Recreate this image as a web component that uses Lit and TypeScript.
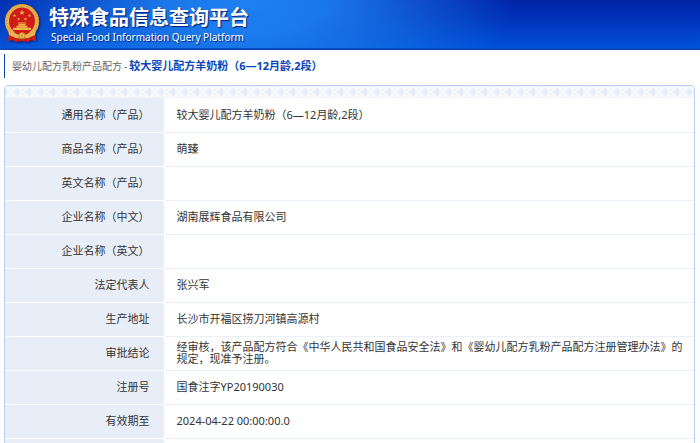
import { LitElement, html, css, svg } from "lit";
import { customElement } from "lit/decorators.js";

interface Field {
  label: string;
  value: string;
}

const FIELDS: Field[] = [
  { label: "通用名称（产品）", value: "较大婴儿配方羊奶粉（6—12月龄,2段）" },
  { label: "商品名称（产品）", value: "萌臻" },
  { label: "英文名称（产品）", value: "" },
  { label: "企业名称（中文）", value: "湖南展辉食品有限公司" },
  { label: "企业名称（英文）", value: "" },
  { label: "法定代表人", value: "张兴军" },
  { label: "生产地址", value: "长沙市开福区捞刀河镇高源村" },
  {
    label: "审批结论",
    value:
      "经审核，该产品配方符合《中华人民共和国食品安全法》和《婴幼儿配方乳粉产品配方注册管理办法》的规定，现准予注册。",
  },
  { label: "注册号", value: "国食注字YP20190030" },
  { label: "有效期至", value: "2024-04-22 00:00:00.0" },
  { label: "", value: "" },
];

const star = (cx: number, cy: number, r: number) => {
  const points = Array.from({ length: 10 }, (_, i) => {
    const radius = i % 2 ? r * 0.4 : r;
    const angle = (Math.PI / 5) * i - Math.PI / 2;
    return `${(cx + radius * Math.cos(angle)).toFixed(2)},${(cy + radius * Math.sin(angle)).toFixed(2)}`;
  }).join(" ");
  return svg`<polygon points=${points} fill="#f0b844" />`;
};

@customElement("site-emblem")
export class SiteEmblem extends LitElement {
  static styles = css`
    :host {
      display: block;
      flex: none;
      width: 36px;
      height: 40px;
      filter: drop-shadow(1px 1px 1px #03207c);
    }
    .emblem {
      display: block;
      width: 100%;
      height: 100%;
    }
  `;

  render() {
    return html`
      <svg class="emblem" viewBox="0 0 36 40" aria-hidden="true">
        <path d="M5 27 L4 37 L9 36 L12 38 L18 37 L24 38 L27 36 L32 37 L31 27Z" fill="#cf2018" />
        <ellipse cx="18" cy="17.5" rx="17.2" ry="17.5" fill="#c4882c" />
        <ellipse cx="18" cy="17.3" rx="16.6" ry="16.8" fill="#e9b654" />
        <ellipse cx="18" cy="17.3" rx="15" ry="15.4" fill="none" stroke="#d49c3c" stroke-width="1.6" stroke-dasharray="1.2 1.6" />
        <ellipse cx="18" cy="17" rx="13" ry="13.6" fill="#d01c18" />
        ${star(18, 8.6, 3)} ${star(10.5, 11.5, 1.9)} ${star(14.5, 15, 1.8)}
        ${star(21.5, 15, 1.8)} ${star(25.5, 11.5, 1.9)}
        <path d="M13.5 19.6 L14.5 18.4 H21.5 L22.5 19.6Z M14.5 20 H21.5 V21.4 H14.5Z M12.5 21.8 H23.5 V23.4 H12.5Z M9 23.8 H27 V26 H9Z" fill="#eeb848" />
        <path d="M4 26 Q9 31 14 30 L16 32.5 L12 34 L5 31Z M32 26 Q27 31 22 30 L20 32.5 L24 34 L31 31Z" fill="#e9b654" />
        <path d="M10 28.5 Q18 26 26 28.5 L22.5 30.5 Q18 28.5 13.5 30.5Z" fill="#d01c18" />
        <circle cx="18" cy="31.6" r="3" fill="#e9b654" stroke="#b87928" stroke-width="0.7" />
        <circle cx="18" cy="31.6" r="1.1" fill="#c98a2a" />
        <path d="M8 33 L10 37 M28 33 L26 37 M14.5 34.5 L14 38 M21.5 34.5 L22 38" stroke="#a31410" stroke-width="0.8" />
      </svg>
    `;
  }
}

@customElement("app-root")
export class AppRoot extends LitElement {
  static styles = css`
    :host {
      display: block;
      height: 100vh;
      overflow: hidden;
      background: #fff;
      color: #333;
      font: 11px/12px "Noto Sans", "Noto Sans CJK SC", sans-serif;
    }
    .banner {
      display: flex;
      align-items: flex-start;
      gap: 9px;
      box-sizing: border-box;
      height: 50px;
      padding: 4px 4px 0;
      border-bottom: 2px solid #0a4abb;
      background:
        radial-gradient(ellipse 270px 120px at 35% 0, #1e80f0 0%, rgba(30, 128, 240, 0.9) 30%, rgba(30, 128, 240, 0) 100%),
        linear-gradient(#0024a8 0%, #0030b8 35%, #0052d8 100%);
    }
    .brand {
      padding-top: 2px;
      color: #fff;
      text-shadow: 1px 1px 1px #03207c;
      white-space: nowrap;
    }
    .title {
      margin: 0;
      font-size: 20px;
      line-height: 24px;
      font-weight: 700;
    }
    .subtitle {
      margin: 0;
      padding-left: 2px;
      color: #fff;
      font-size: 10px;
      line-height: 14px;
    }
    .crumbs {
      display: flex;
      align-items: center;
      gap: 2px;
      margin: 4px 4px 7px;
      padding-left: 7px;
      height: 24px;
      border-left: 1px solid #0a46b8;
    }
    .section {
      color: #666;
      font-size: 10px;
    }
    .current {
      margin: 0;
      color: #0a46b8;
      font-size: 11px;
      font-weight: 700;
    }
    .panel {
      margin: 0 5px 0 4px;
      border: 1px solid #b9d0f3;
      border-radius: 4px 4px 0 0;
      overflow: hidden;
    }
    .pattern {
      display: block;
      width: 100%;
      height: 12px;
    }
    .record {
      width: 100%;
      border-collapse: collapse;
      table-layout: fixed;
    }
    .label,
    .value {
      box-sizing: border-box;
      height: 34px;
      padding: 0 8px 0 12px;
      font-weight: 400;
      vertical-align: middle;
    }
    .label {
      width: 159px;
      padding-right: 14px;
      border-right: 1px solid #fff;
      border-bottom: 1px solid #fff;
      background: #e8eef7;
      text-align: right;
    }
    .value {
      border-bottom: 1px solid #eaf0fa;
      text-align: left;
    }
  `;

  render() {
    return html`
      <header class="banner">
        <site-emblem></site-emblem>
        <div class="brand">
          <h1 class="title">特殊食品信息查询平台</h1>
          <p class="subtitle">Special Food Information Query Platform</p>
        </div>
      </header>
      <main>
        <div class="crumbs">
          <span class="section">婴幼儿配方乳粉产品配方</span>
          <span class="section">-</span>
          <h2 class="current">较大婴儿配方羊奶粉（6—12月龄,2段）</h2>
        </div>
        <section class="panel">
          <svg class="pattern" aria-hidden="true">
            <defs>
              <pattern id="lattice" width="12" height="12" patternUnits="userSpaceOnUse">
                <rect width="12" height="12" fill="#eff4fc" />
                <path d="M0 3 L3 6 L0 9Z M12 3 L9 6 L12 9Z M6 3 L9 6 L6 9 L3 6Z" fill="#e6eefa" />
                <path d="M0 0 L12 12 M12 0 L0 12" stroke="#fff" stroke-width="1.2" />
                <path d="M2 2 H10 M2 10 H10" stroke="#fff" stroke-width="0.8" />
                <path d="M0 0 V12" stroke="#e0e9f8" stroke-width="1.4" />
              </pattern>
            </defs>
            <rect width="100%" height="12" fill="url(#lattice)" />
          </svg>
          <table class="record">
            <tbody>
              ${FIELDS.map(
                (field) => html`
                  <tr>
                    <th class="label" scope="row">${field.label}</th>
                    <td class="value">${field.value}</td>
                  </tr>
                `,
              )}
            </tbody>
          </table>
        </section>
      </main>
    `;
  }
}
